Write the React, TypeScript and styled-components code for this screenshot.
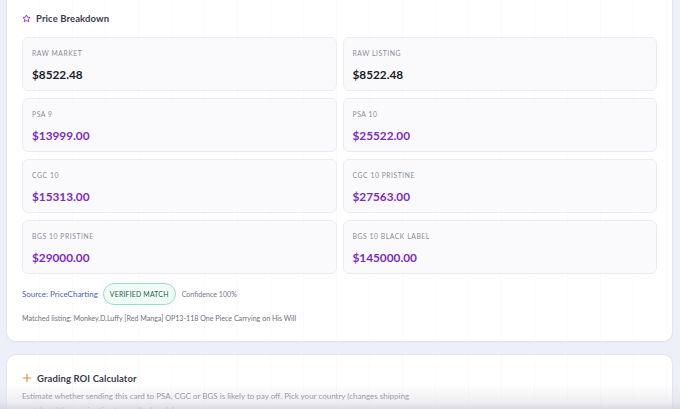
import React from "react";
import styled, { createGlobalStyle } from "styled-components";

const GlobalStyle = createGlobalStyle`
  html, body {
    margin: 0;
    padding: 0;
    background: #eef0f9;
    font-family: "Lato", "Inter", sans-serif;
    -webkit-font-smoothing: antialiased;
    overflow: hidden;
  }
`;

const Page = styled.div`
  display: flex;
  flex-direction: column;
  gap: 12px;
  padding: 0 7px 0 6px;
`;

const Card = styled.section<{ $clipped?: boolean }>`
  background-color: #ffffff;
  background-image: repeating-linear-gradient(
    to right,
    transparent 0,
    transparent 32px,
    rgba(120, 125, 170, 0.035) 32px,
    rgba(120, 125, 170, 0.035) 33px
  );
  border: 1px solid #e3e5f1;
  border-radius: 10px;
  padding: ${(p) => (p.$clipped ? "22px 15px 17px 15px" : "16px 15px 20px 15px")};
  margin-top: ${(p) => (p.$clipped ? "-12px" : "0")};
  box-shadow: 0 1px 2px rgba(60, 60, 110, 0.04);
`;

const TitleRow = styled.div`
  display: flex;
  align-items: center;
  gap: 5px;
  height: 14px;
`;

const Title = styled.h2`
  margin: 0;
  font-size: 9.5px;
  font-weight: 700;
  color: #3a3b4d;
  letter-spacing: 0.1px;
`;

const TileGrid = styled.div`
  display: grid;
  grid-template-columns: 1fr 1fr;
  gap: 7px 6px;
  margin-top: 12px;
`;

const Tile = styled.div`
  height: 54px;
  box-sizing: border-box;
  padding: 11px 9px 0;
  background: rgba(248, 248, 252, 0.75);
  border: 1px solid #ebecf3;
  border-radius: 6px;
  display: flex;
  flex-direction: column;
`;

const TileLabel = styled.div`
  font-size: 6.8px;
  line-height: 9px;
  letter-spacing: 0.55px;
  text-transform: uppercase;
  color: #8a8b98;
`;

const TileValue = styled.div<{ $accent?: boolean }>`
  margin-top: 9px;
  font-size: 11.8px;
  line-height: 15px;
  font-weight: 700;
  color: ${(p) => (p.$accent ? "#7d2bc4" : "#1d1d2c")};
`;

const MetaRow = styled.div`
  display: flex;
  align-items: center;
  gap: 5px;
  margin-top: 9px;
`;

const SourceLink = styled.a`
  font-size: 8px;
  color: #4762c0;
  text-decoration: none;
`;

const Badge = styled.span`
  display: inline-flex;
  align-items: center;
  height: 22px;
  box-sizing: border-box;
  padding: 0 6px;
  margin-right: 1px;
  border: 1px solid #98e0c3;
  border-radius: 11px;
  background: #effbf6;
  color: #2f5a4d;
  font-size: 6.9px;
  letter-spacing: 0.2px;
`;

const MetaText = styled.span`
  font-size: 7.1px;
  color: #777886;
`;

const MatchedText = styled.p`
  margin: 9px 0 0;
  font-size: 7.1px;
  line-height: 10px;
  color: #6f707e;
`;

const Description = styled.p`
  margin: 4px 0 0;
  max-width: 400px;
  font-size: 8px;
  line-height: 14px;
  color: #767785;
`;

const BottomFade = styled.div`
  position: fixed;
  left: 0;
  right: 0;
  bottom: 0;
  height: 24px;
  pointer-events: none;
  background: linear-gradient(
    to bottom,
    rgba(240, 240, 246, 0) 0%,
    rgba(222, 222, 230, 0.5) 70%,
    rgba(210, 210, 220, 0.8) 100%
  );
`;

const StarIcon = () => (
  <svg width="9" height="9" viewBox="0 0 24 24" fill="none" stroke="#8b3fd1" strokeWidth="2.6" strokeLinejoin="round">
    <path d="M12 2.5l2.9 6.1 6.6.8-4.9 4.6 1.3 6.6L12 17.3l-5.9 3.3 1.3-6.6-4.9-4.6 6.6-.8z" />
  </svg>
);

const PlusIcon = () => (
  <svg width="10" height="10" viewBox="0 0 24 24" fill="none" stroke="#d68a4c" strokeWidth="2.6" strokeLinecap="round">
    <path d="M12 3v18M3 12h18" />
  </svg>
);

type Price = { label: string; value: string; accent?: boolean };

const prices: Price[] = [
  { label: "Raw Market", value: "$8522.48" },
  { label: "Raw Listing", value: "$8522.48" },
  { label: "PSA 9", value: "$13999.00", accent: true },
  { label: "PSA 10", value: "$25522.00", accent: true },
  { label: "CGC 10", value: "$15313.00", accent: true },
  { label: "CGC 10 Pristine", value: "$27563.00", accent: true },
  { label: "BGS 10 Pristine", value: "$29000.00", accent: true },
  { label: "BGS 10 Black Label", value: "$145000.00", accent: true },
];

export default function App() {
  return (
    <>
      <GlobalStyle />
      <Page>
        <Card $clipped>
          <TitleRow>
            <StarIcon />
            <Title>Price Breakdown</Title>
          </TitleRow>
          <TileGrid>
            {prices.map((p) => (
              <Tile key={p.label}>
                <TileLabel>{p.label}</TileLabel>
                <TileValue $accent={p.accent}>{p.value}</TileValue>
              </Tile>
            ))}
          </TileGrid>
          <MetaRow>
            <SourceLink href="#">Source: PriceCharting</SourceLink>
            <Badge>VERIFIED MATCH</Badge>
            <MetaText>Confidence 100%</MetaText>
          </MetaRow>
          <MatchedText>
            Matched listing: Monkey.D.Luffy [Red Manga] OP13-118 One Piece Carrying on His Will
          </MatchedText>
        </Card>
        <Card>
          <TitleRow>
            <PlusIcon />
            <Title>Grading ROI Calculator</Title>
          </TitleRow>
          <Description>
            Estimate whether sending this card to PSA, CGC or BGS is likely to pay off. Pick your country (changes shipping
            costs) and the service tier to see the breakdown.
          </Description>
        </Card>
      </Page>
      <BottomFade />
    </>
  );
}
